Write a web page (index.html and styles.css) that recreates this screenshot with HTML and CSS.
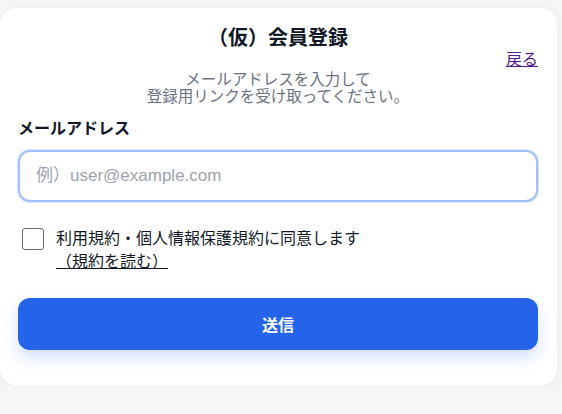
FILE: index.html
```html
<!DOCTYPE html>
<html lang="ja">
<head>
<meta charset="utf-8">
<title>（仮）会員登録</title>
<link rel="stylesheet" href="styles.css">
</head>
<body>
<main class="card">
  <h1 class="title">（仮）会員登録</h1>
  <div class="back-row"><a class="back" href="#">戻る</a></div>
  <p class="lead">メールアドレスを入力して<br>登録用リンクを受け取ってください。</p>
  <form class="form">
    <label class="label" for="email">メールアドレス</label>
    <input class="input" id="email" type="email" placeholder="例）user@example.com">
    <div class="agree">
      <input class="check" type="checkbox" id="agree">
      <div class="agree-text">
        <label for="agree">利用規約・個人情報保護規約に同意します</label>
        <a class="terms" href="#">（規約を読む）</a>
      </div>
    </div>
    <button class="submit" type="button">送信</button>
  </form>
</main>
</body>
</html>
```

FILE: styles.css
```css
html, body {
  margin: 0;
  padding: 0;
  background: #f5f6f8;
}
body {
  font-family: "Liberation Sans", "Noto Sans CJK JP", sans-serif;
  color: #111827;
}
.card {
  box-sizing: border-box;
  width: 557px;
  margin-top: 8px;
  background: #ffffff;
  border-radius: 16px;
  padding: 18px 19px 35px 18px;
  box-shadow: 0 4px 14px rgba(15, 23, 42, 0.06);
}
.title {
  margin: 0;
  text-align: center;
  font-size: 20px;
  line-height: 24px;
  font-weight: 700;
  color: #111827;
}
.back-row {
  display: flex;
  justify-content: flex-end;
}
.back {
  font-size: 16px;
  line-height: 20px;
  color: #551a8b;
}
.lead {
  margin: 1px 0 0;
  text-align: center;
  font-size: 15.5px;
  line-height: 17px;
  color: #6b7280;
}
.form {
  display: flex;
  flex-direction: column;
}
.label {
  margin-top: 14px;
  font-size: 16px;
  line-height: 20px;
  font-weight: 700;
  color: #111827;
}
.input {
  box-sizing: border-box;
  margin-top: 11px;
  height: 52px;
  width: 100%;
  border: 2px solid #a3bff7;
  border-radius: 12px;
  padding: 0 16px;
  font-family: "Liberation Sans", "Noto Sans CJK JP", sans-serif;
  font-size: 17px;
  color: #111827;
  outline: none;
  box-shadow: 0 0 0 1px rgba(147, 180, 245, 0.35);
}
.input::placeholder {
  color: #9ca3af;
}
.agree {
  display: flex;
  align-items: flex-start;
  gap: 12px;
  margin-top: 25px;
  padding-left: 4px;
}
.check {
  appearance: none;
  margin: 1px 0 0;
  flex: none;
  width: 22px;
  height: 22px;
  border: 1px solid #6b6b6b;
  border-radius: 3px;
  background: #fff;
}
.agree-text {
  display: flex;
  flex-direction: column;
  align-items: flex-start;
  font-size: 16px;
  line-height: 23px;
  color: #111827;
}
.terms {
  color: #111827;
  text-decoration: underline;
}
.submit {
  margin-top: 25px;
  height: 52px;
  width: 100%;
  border: none;
  border-radius: 12px;
  background: #2563eb;
  color: #ffffff;
  font-family: "Liberation Sans", "Noto Sans CJK JP", sans-serif;
  font-size: 16px;
  font-weight: 700;
  box-shadow: 0 8px 16px rgba(37, 99, 235, 0.2);
}
```
